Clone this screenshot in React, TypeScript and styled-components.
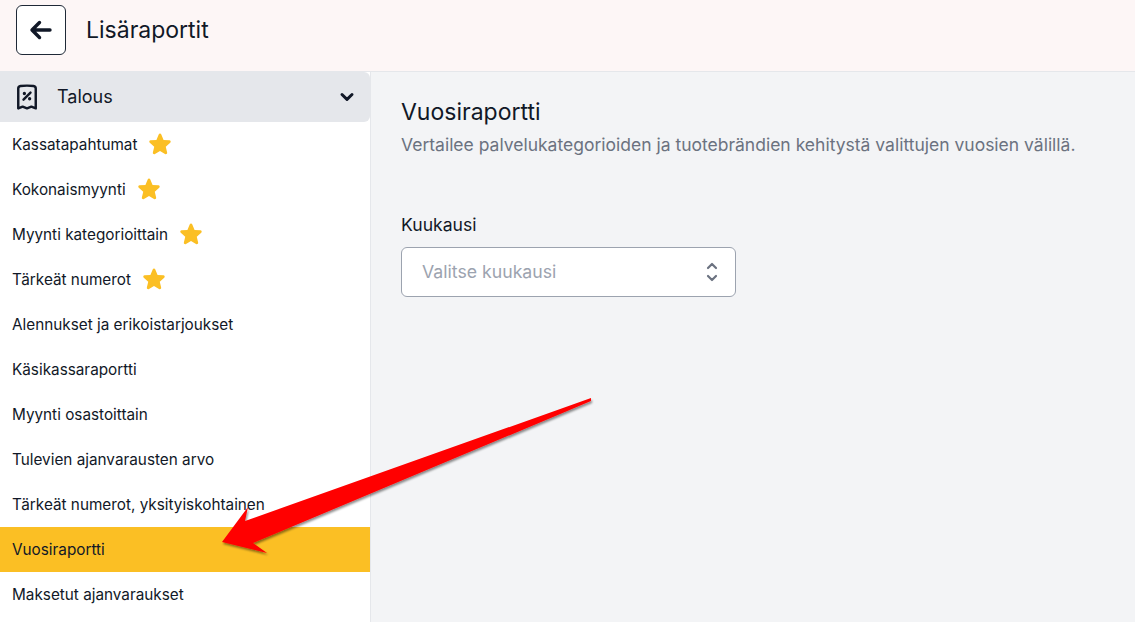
import React from 'react'
import styled, { createGlobalStyle } from 'styled-components'
import {
  HiArrowLeft,
  HiChevronDown,
  HiOutlineReceiptPercent,
  HiStar,
} from 'react-icons/hi2'

const GlobalStyle = createGlobalStyle`
  html, body {
    margin: 0;
    padding: 0;
    height: 100%;
    overflow: hidden;
  }
  body {
    font-family: Inter, "Liberation Sans", sans-serif;
    color: #111827;
    background: #f3f4f6;
  }
`

const Screen = styled.div`
  position: relative;
  width: 1135px;
  height: 622px;
  display: flex;
  flex-direction: column;
  overflow: hidden;
`

const Header = styled.header`
  flex: none;
  height: 72px;
  box-sizing: border-box;
  display: flex;
  align-items: flex-start;
  gap: 20px;
  padding: 5px 16px 0;
  background: #fdf6f6;
  border-bottom: 1px solid #e5e7eb;
`

const BackButton = styled.button`
  width: 50px;
  height: 50px;
  display: flex;
  align-items: center;
  justify-content: center;
  padding: 0;
  color: #111827;
  background: #fff;
  border: 1px solid #1f2937;
  border-radius: 6px;
  font-size: 24px;

  svg {
    stroke-width: 1.9;
  }
`

const PageTitle = styled.h1`
  margin: 0;
  font-size: 23px;
  font-weight: 400;
  line-height: 51px;
`

const Body = styled.div`
  flex: 1;
  display: flex;
  min-height: 0;
`

const Sidebar = styled.nav`
  flex: none;
  width: 371px;
  box-sizing: border-box;
  background: #fff;
  border-right: 1px solid #e5e7eb;
`

const GroupHeader = styled.div`
  height: 50px;
  display: flex;
  align-items: center;
  padding: 0 15px;
  background: #e5e7eb;
  border-radius: 0 6px 6px 0;
  font-size: 18px;
  line-height: 24px;
`

const GroupIcon = styled(HiOutlineReceiptPercent)`
  flex: none;
  font-size: 28px;
  margin-right: 16px;
  margin-left: -2px;
  stroke-width: 2.1;
`

const GroupLabel = styled.span`
  flex: 1;
`

const GroupChevron = styled(HiChevronDown)`
  flex: none;
  font-size: 16px;
  stroke-width: 3;
`

const Item = styled.a<{ $active?: boolean }>`
  height: 45px;
  display: flex;
  align-items: center;
  gap: 10px;
  padding: 0 12px 1px;
  box-sizing: border-box;
  font-size: 15.3px;
  font-weight: 400;
  color: #111827;
  background: ${({ $active }) => ($active ? '#fbbf24' : 'transparent')};
`

const Star = styled(HiStar)`
  flex: none;
  font-size: 26px;
  color: #fbbf24;
`

const Main = styled.main`
  flex: 1;
  padding: 24px 30px;
`

const ReportTitle = styled.h2`
  margin: 0;
  font-size: 23px;
  font-weight: 400;
  line-height: 32px;
`

const ReportText = styled.p`
  margin: 5px 0 0;
  font-size: 17.5px;
  line-height: 24px;
  color: #6b7280;
`

const Field = styled.div`
  margin-top: 56px;
  width: 335px;
`

const FieldLabel = styled.label`
  display: block;
  font-size: 17.6px;
  line-height: 24px;
  margin-bottom: 10px;
`

const Select = styled.div`
  height: 50px;
  box-sizing: border-box;
  display: flex;
  align-items: center;
  justify-content: space-between;
  padding: 0 16px 1px 20px;
  background: #fff;
  border: 1px solid #9ca3af;
  border-radius: 6px;
  font-size: 17.7px;
  color: #9ca3af;
`

const SelectIcon = styled.svg`
  width: 14px;
  height: 22px;
  fill: none;
  stroke: #6b7280;
  stroke-width: 2.2;
  stroke-linecap: round;
  stroke-linejoin: round;
`

const ArrowOverlay = styled.svg`
  position: absolute;
  inset: 0;
  pointer-events: none;
`

const items = [
  { label: 'Kassatapahtumat', star: true },
  { label: 'Kokonaismyynti', star: true },
  { label: 'Myynti kategorioittain', star: true },
  { label: 'Tärkeät numerot', star: true },
  { label: 'Alennukset ja erikoistarjoukset' },
  { label: 'Käsikassaraportti' },
  { label: 'Myynti osastoittain' },
  { label: 'Tulevien ajanvarausten arvo' },
  { label: 'Tärkeät numerot, yksityiskohtainen' },
  { label: 'Vuosiraportti', active: true },
  { label: 'Maksetut ajanvaraukset' },
]

const App: React.FC = () => {
  return (
    <Screen>
      <GlobalStyle />
      <Header>
        <BackButton aria-label="Takaisin">
          <HiArrowLeft />
        </BackButton>
        <PageTitle>Lisäraportit</PageTitle>
      </Header>
      <Body>
        <Sidebar>
          <GroupHeader>
            <GroupIcon />
            <GroupLabel>Talous</GroupLabel>
            <GroupChevron />
          </GroupHeader>
          {items.map((item) => (
            <Item key={item.label} $active={item.active}>
              {item.label}
              {item.star && <Star />}
            </Item>
          ))}
        </Sidebar>
        <Main>
          <ReportTitle>Vuosiraportti</ReportTitle>
          <ReportText>
            Vertailee palvelukategorioiden ja tuotebrändien kehitystä valittujen vuosien välillä.
          </ReportText>
          <Field>
            <FieldLabel>Kuukausi</FieldLabel>
            <Select>
              Valitse kuukausi
              <SelectIcon viewBox="0 0 14 22">
                <path d="M3 7 L7 3 L11 7" />
                <path d="M3 15 L7 19 L11 15" />
              </SelectIcon>
            </Select>
          </Field>
        </Main>
      </Body>
      <ArrowOverlay width="1135" height="622" viewBox="0 0 1135 622">
        <defs>
          <filter id="arrowShadow" x="-10%" y="-10%" width="120%" height="130%">
            <feDropShadow dx="1" dy="2" stdDeviation="1.2" floodColor="#000" floodOpacity="0.45" />
          </filter>
        </defs>
        <path
          d="M591 398 L245 521 L248 507 L222 542 L267 553 L253 543 L591 401 Z"
          fill="#ff0000"
          filter="url(#arrowShadow)"
        />
      </ArrowOverlay>
    </Screen>
  )
}

export default App
